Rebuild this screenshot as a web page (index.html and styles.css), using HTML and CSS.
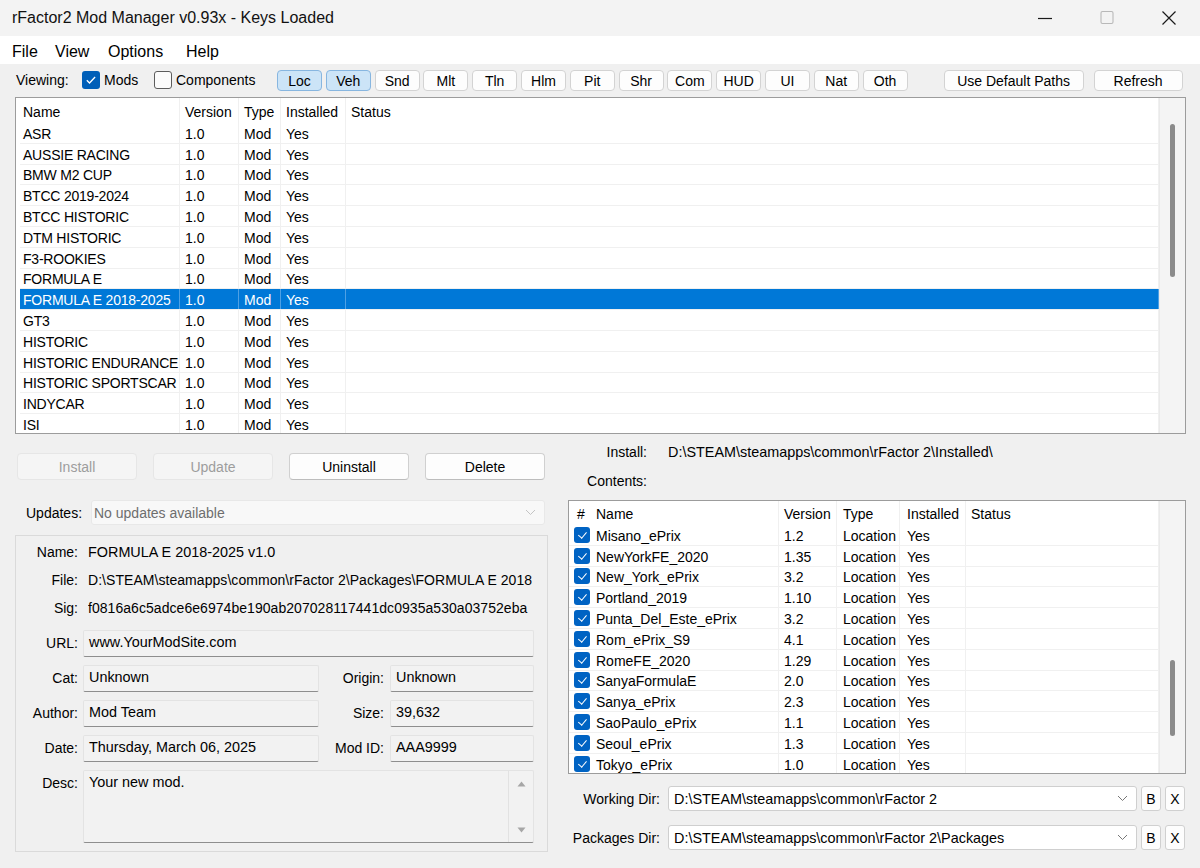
FILE: index.html
```html
<!DOCTYPE html>
<html>
<head>
<meta charset="utf-8">
<title>rFactor2 Mod Manager</title>
<link rel="stylesheet" href="styles.css">
</head>
<body>
<div class="win">
  <div class="titlebar">
    <span class="title">rFactor2 Mod Manager v0.93x - Keys Loaded</span>
    <div class="wctl">
      <span class="wbtn"><svg width="16" height="16" viewBox="0 0 16 16"><path d="M1 8.5h14" stroke="#1a1a1a" stroke-width="1.2"/></svg></span>
      <span class="wbtn"><svg width="16" height="16" viewBox="0 0 16 16"><rect x="2" y="1.5" width="12" height="12" rx="1.5" fill="none" stroke="#b8b8b8" stroke-width="1.1"/></svg></span>
      <span class="wbtn"><svg width="16" height="16" viewBox="0 0 16 16"><path d="M1.5 1.5l13 13M14.5 1.5l-13 13" stroke="#1a1a1a" stroke-width="1.2"/></svg></span>
    </div>
  </div>
  <div class="menubar">
    <span class="mi w-file">File</span><span class="mi w-view">View</span><span class="mi w-opt">Options</span><span class="mi">Help</span>
  </div>
  <div class="body">
    <div class="toolbar">
      <span class="vlabel">Viewing:</span>
      <span class="cb on"><svg width="18" height="18" viewBox="0 0 18 18"><path d="M4.8 9.3l2.7 2.7 5.6-6" stroke="#fff" fill="none" stroke-width="1.3"/></svg></span>
      <span class="cbtext w-mods">Mods</span>
      <span class="cb off"></span>
      <span class="cbtext w-comp">Components</span>
      <div class="tabs">
        <span class="tb act">Loc</span><span class="tb act">Veh</span><span class="tb">Snd</span><span class="tb">Mlt</span><span class="tb">Tln</span><span class="tb">Hlm</span><span class="tb">Pit</span><span class="tb">Shr</span><span class="tb">Com</span><span class="tb">HUD</span><span class="tb">UI</span><span class="tb">Nat</span><span class="tb">Oth</span>
      </div>
      <span class="tb wide">Use Default Paths</span>
      <span class="tb refresh">Refresh</span>
    </div>

    <div class="mainlist">
      <div class="lbody">
        <div class="mrow hdr"><span>Name</span><span>Version</span><span>Type</span><span>Installed</span><span>Status</span></div>
        <div class="mrow"><span>ASR</span><span>1.0</span><span>Mod</span><span>Yes</span><span></span></div>
        <div class="mrow"><span>AUSSIE RACING</span><span>1.0</span><span>Mod</span><span>Yes</span><span></span></div>
        <div class="mrow"><span>BMW M2 CUP</span><span>1.0</span><span>Mod</span><span>Yes</span><span></span></div>
        <div class="mrow"><span>BTCC 2019-2024</span><span>1.0</span><span>Mod</span><span>Yes</span><span></span></div>
        <div class="mrow"><span>BTCC HISTORIC</span><span>1.0</span><span>Mod</span><span>Yes</span><span></span></div>
        <div class="mrow"><span>DTM HISTORIC</span><span>1.0</span><span>Mod</span><span>Yes</span><span></span></div>
        <div class="mrow"><span>F3-ROOKIES</span><span>1.0</span><span>Mod</span><span>Yes</span><span></span></div>
        <div class="mrow"><span>FORMULA E</span><span>1.0</span><span>Mod</span><span>Yes</span><span></span></div>
        <div class="mrow sel"><span>FORMULA E 2018-2025</span><span>1.0</span><span>Mod</span><span>Yes</span><span></span></div>
        <div class="mrow"><span>GT3</span><span>1.0</span><span>Mod</span><span>Yes</span><span></span></div>
        <div class="mrow"><span>HISTORIC</span><span>1.0</span><span>Mod</span><span>Yes</span><span></span></div>
        <div class="mrow"><span>HISTORIC ENDURANCE</span><span>1.0</span><span>Mod</span><span>Yes</span><span></span></div>
        <div class="mrow"><span>HISTORIC SPORTSCAR</span><span>1.0</span><span>Mod</span><span>Yes</span><span></span></div>
        <div class="mrow"><span>INDYCAR</span><span>1.0</span><span>Mod</span><span>Yes</span><span></span></div>
        <div class="mrow"><span>ISI</span><span>1.0</span><span>Mod</span><span>Yes</span><span></span></div>
      </div>
      <div class="vscroll main"><div class="thumb"></div></div>
    </div>

    <div class="bottom">
      <div class="leftcol">
        <div class="actions">
          <span class="btn dis">Install</span>
          <span class="btn dis">Update</span>
          <span class="btn">Uninstall</span>
          <span class="btn">Delete</span>
        </div>
        <div class="updrow">
          <span class="ulabel">Updates:</span>
          <div class="combo dis"><span>No updates available</span><svg width="11" height="7" viewBox="0 0 11 7"><path d="M1 1l4.5 4.5L10 1" stroke="#c4c4c4" fill="none"/></svg></div>
        </div>
        <div class="group">
          <div class="irow"><span class="lbl">Name:</span><span class="val">FORMULA E 2018-2025 v1.0</span></div>
          <div class="irow"><span class="lbl">File:</span><span class="clip">D:\STEAM\steamapps\common\rFactor 2\Packages\FORMULA E 2018</span></div>
          <div class="irow"><span class="lbl">Sig:</span><span class="clip">f0816a6c5adce6e6974be190ab207028117441dc0935a530a03752eba</span></div>
          <div class="frow first"><span class="lbl">URL:</span><span class="fld full">www.YourModSite.com</span></div>
          <div class="frow"><span class="lbl">Cat:</span><span class="fld half">Unknown</span><span class="lbl2">Origin:</span><span class="fld small">Unknown</span></div>
          <div class="frow"><span class="lbl">Author:</span><span class="fld half">Mod Team</span><span class="lbl2">Size:</span><span class="fld small">39,632</span></div>
          <div class="frow"><span class="lbl">Date:</span><span class="fld half">Thursday, March 06, 2025</span><span class="lbl2">Mod ID:</span><span class="fld small">AAA9999</span></div>
          <div class="frow desc"><span class="lbl">Desc:</span>
            <div class="fld full dfld"><span class="dtext">Your new mod.</span>
              <div class="dscroll">
                <svg width="9" height="6" viewBox="0 0 9 6"><path d="M4.5 0.5L8.5 5.5H0.5z" fill="#a6a6a6"/></svg>
                <svg width="9" height="6" viewBox="0 0 9 6"><path d="M0.5 0.5H8.5L4.5 5.5z" fill="#a6a6a6"/></svg>
              </div>
            </div>
          </div>
        </div>
      </div>

      <div class="rightcol">
        <div class="rline inst"><span class="rlabel">Install:</span><span class="rval">D:\STEAM\steamapps\common\rFactor 2\Installed\</span></div>
        <div class="rline cont"><span class="rlabel">Contents:</span></div>
        <div class="clist">
          <div class="cbody">
            <div class="crow hdr"><span class="hash">#</span><span>Name</span><span>Version</span><span>Type</span><span>Installed</span><span>Status</span></div>
            <div class="crow"><span class="ck"><i class="sc"></i></span><span>Misano_ePrix</span><span>1.2</span><span>Location</span><span>Yes</span><span></span></div>
            <div class="crow"><span class="ck"><i class="sc"></i></span><span>NewYorkFE_2020</span><span>1.35</span><span>Location</span><span>Yes</span><span></span></div>
            <div class="crow"><span class="ck"><i class="sc"></i></span><span>New_York_ePrix</span><span>3.2</span><span>Location</span><span>Yes</span><span></span></div>
            <div class="crow"><span class="ck"><i class="sc"></i></span><span>Portland_2019</span><span>1.10</span><span>Location</span><span>Yes</span><span></span></div>
            <div class="crow"><span class="ck"><i class="sc"></i></span><span>Punta_Del_Este_ePrix</span><span>3.2</span><span>Location</span><span>Yes</span><span></span></div>
            <div class="crow"><span class="ck"><i class="sc"></i></span><span>Rom_ePrix_S9</span><span>4.1</span><span>Location</span><span>Yes</span><span></span></div>
            <div class="crow"><span class="ck"><i class="sc"></i></span><span>RomeFE_2020</span><span>1.29</span><span>Location</span><span>Yes</span><span></span></div>
            <div class="crow"><span class="ck"><i class="sc"></i></span><span>SanyaFormulaE</span><span>2.0</span><span>Location</span><span>Yes</span><span></span></div>
            <div class="crow"><span class="ck"><i class="sc"></i></span><span>Sanya_ePrix</span><span>2.3</span><span>Location</span><span>Yes</span><span></span></div>
            <div class="crow"><span class="ck"><i class="sc"></i></span><span>SaoPaulo_ePrix</span><span>1.1</span><span>Location</span><span>Yes</span><span></span></div>
            <div class="crow"><span class="ck"><i class="sc"></i></span><span>Seoul_ePrix</span><span>1.3</span><span>Location</span><span>Yes</span><span></span></div>
            <div class="crow"><span class="ck"><i class="sc"></i></span><span>Tokyo_ePrix</span><span>1.0</span><span>Location</span><span>Yes</span><span></span></div>
          </div>
          <div class="vscroll cs"><div class="thumb"></div></div>
        </div>
        <div class="dirrow wd">
          <span class="dlabel">Working Dir:</span>
          <div class="combo"><span>D:\STEAM\steamapps\common\rFactor 2</span><svg width="11" height="7" viewBox="0 0 11 7"><path d="M1 1l4.5 4.5L10 1" stroke="#777" fill="none"/></svg></div>
          <span class="sbtn">B</span><span class="sbtn">X</span>
        </div>
        <div class="dirrow pd">
          <span class="dlabel">Packages Dir:</span>
          <div class="combo"><span>D:\STEAM\steamapps\common\rFactor 2\Packages</span><svg width="11" height="7" viewBox="0 0 11 7"><path d="M1 1l4.5 4.5L10 1" stroke="#777" fill="none"/></svg></div>
          <span class="sbtn">B</span><span class="sbtn">X</span>
        </div>
      </div>
    </div>
  </div>
</div>
</body>
</html>
```

FILE: styles.css
```css
* { box-sizing: border-box; }
html, body { margin: 0; padding: 0; }
body {
  width: 1200px; height: 868px; overflow: hidden;
  font-family: "Liberation Sans", Arial, sans-serif;
  font-size: 14px; color: #000; background: #f0f0f0;
}
.win { width: 1200px; height: 868px; display: flex; flex-direction: column; }

.titlebar {
  height: 36px; background: #f3f3f3; display: flex; align-items: center;
  padding-left: 12px;
}
.title { font-size: 16px; flex: 1; color: #111; }
.wctl { display: flex; height: 36px; }
.wbtn { width: 62px; height: 36px; display: flex; align-items: center; justify-content: center; }

.menubar {
  height: 28px; background: #fff; display: flex; align-items: center;
  padding: 3px 0 0 12px; font-size: 16px;
}
.mi { display: inline-block; }
.w-file { width: 43px; }
.w-view { width: 53px; }
.w-opt { width: 78px; }

.body { flex: 1; border-left: 1px solid #777; display: flex; flex-direction: column; margin-left: -1px; }

.toolbar {
  height: 32px; display: flex; align-items: center; padding-left: 16px;
}
.vlabel { width: 66px; }
.cb { width: 18px; height: 18px; border-radius: 3px; margin-right: 4px; display: inline-block; }
.cb.on { background: #005fb8; }
.cb.on svg { display: block; }
.cb.off { border: 1px solid #5c5c5c; background: #fbfbfb; }
.w-mods { width: 50px; }
.w-comp { width: 101px; }
.tabs { display: flex; gap: 3.8px; }
.tb {
  width: 45px; height: 21px; border: 1px solid #d3d3d3; border-radius: 4px;
  background: #fdfdfd; display: flex; align-items: center; justify-content: center;
  font-size: 14px; padding-top: 1px;
}
.tb.act { background: #cce4f7; border-color: #87b6e0; }
.tb.wide { width: 140px; margin-left: 36px; }
.tb.refresh { width: 89px; margin-left: 10px; }

.mainlist {
  margin: 1px 14px 0 15px; height: 337px; border: 1px solid #9c9c9c;
  background: #fff; display: flex;
}
.lbody { flex: 1; padding-left: 4px; overflow: hidden; }
.mrow {
  display: grid; grid-template-columns: 160px 59px 42px 65px 1fr;
  height: 20.8px; border-bottom: 1px solid #f0f0f0;
  white-space: nowrap;
}
.mrow span { display: flex; align-items: center; padding: 2px 0 0 5px; border-right: 1px solid #f0f0f0; overflow: hidden; }
.mrow span:first-child { padding-left: 3px; letter-spacing: -0.22px; }
.mrow.hdr { height: 25px; border-bottom: none; }
.mrow.hdr span:first-child { letter-spacing: 0; }
.mrow.sel { background: #0078d7; color: #fff; }
.mrow.sel span { border-right-color: #4ea0e4; }

.vscroll { width: 26px; background: #f4f4f4; border-left: 1px solid #eaeaea; position: relative; }
.thumb { position: absolute; left: 10px; width: 5px; border-radius: 3px; background: #8b8b8b; }
.vscroll.main .thumb { top: 26px; height: 153px; }
.vscroll.cs .thumb { top: 159px; height: 76px; }

.bottom { display: flex; margin-left: 15px; }
.leftcol { width: 533px; }
.rightcol { width: 618px; margin-left: 20px; }

.actions { display: flex; gap: 16px; margin-top: 19px; padding-left: 2px; }
.btn {
  width: 120px; height: 27px; border: 1px solid #d0d0d0; border-radius: 4px;
  background: #fdfdfd; display: flex; align-items: center; justify-content: center;
  border-bottom-color: #bdbdbd;
}
.btn.dis { background: #f5f5f5; border-color: #e6e6e6; color: #9d9d9d; }

.updrow { display: flex; align-items: center; margin-top: 20px; height: 25px; padding-left: 11px; }
.ulabel { width: 65px; }
.combo {
  flex: 1; height: 25px; display: flex; align-items: center; justify-content: space-between;
  padding: 0 8px 0 2px; border: 1px solid #d3d3d3; border-radius: 3px; background: #fff;
}
.combo.dis { background: #f8f8f8; border-color: #e8e8e8; color: #6e6e6e; margin-right: 3px; }

.group {
  margin-top: 10px; height: 317px; border: 1px solid #dadada;
  padding: 2px 13px 0 0; background: #f0f0f0;
}
.irow { display: grid; grid-template-columns: 62px 1fr; column-gap: 10px; height: 28px; align-items: center; }
.val { font-size: 14.4px; }
.lbl { text-align: right; }
.clip { white-space: nowrap; overflow: hidden; letter-spacing: 0.05px; }
.frow { display: flex; align-items: flex-start; margin-top: 8px; height: 27px; }
.frow .lbl { width: 62px; flex: none; padding-top: 5px; }
.fld {
  height: 27px; background: #f2f2f2; border: 1px solid #e3e3e3; border-bottom: 1px solid #8e8e8e;
  border-radius: 2px; padding: 3px 0 0 5px; margin-left: 5px; white-space: nowrap; overflow: hidden;
  font-size: 14.4px;
}
.fld.full { flex: 1; }
.fld.half { width: 236px; }
.fld.small { width: 144px; margin-left: 6px; }
.lbl2 { width: 65px; text-align: right; padding-top: 5px; }
.frow.desc { height: 73px; }
.frow.desc .lbl { padding-top: 5px; }
.dfld { height: 73px; display: flex; padding: 3px 0 0 5px; }
.dtext { flex: 1; }
.dscroll {
  width: 25px; height: 72px; margin-top: -4px; border-left: 1px solid #e2e2e2;
  display: flex; flex-direction: column; justify-content: space-between; align-items: center;
  padding: 11px 0 9px;
}
.dscroll svg { display: block; }

.rline { display: flex; align-items: center; height: 20px; }
.rline.inst { margin-top: 8px; }
.rline.cont { margin-top: 9px; }
.rlabel { width: 79px; text-align: right; }
.rval { margin-left: 21px; font-size: 14.4px; }

.clist {
  margin-top: 9px; height: 274px; border: 1px solid #9c9c9c; background: #fff; display: flex;
}
.cbody { flex: 1; overflow: hidden; }
.crow {
  display: grid; grid-template-columns: 22px 188px 58px 63px 66px 1fr;
  height: 20.8px; border-bottom: 1px solid #f0f0f0; white-space: nowrap;
}
.crow span { display: flex; align-items: center; padding: 2px 0 0 5px; border-right: 1px solid #f0f0f0; overflow: hidden; }
.crow span:nth-child(4) { padding-left: 6px; }
.crow span:nth-child(5) { padding-left: 7px; }
.crow.hdr { height: 24px; border-bottom: none; }
.crow.hdr span.hash { padding-left: 8px; border-right: none; }
.crow span.ck { padding: 0 0 0 5px; border-right: none; }
.sc {
  display: block; width: 16px; height: 16px; border-radius: 3px; background: #0063c3;
  position: relative;
}
.sc::after {
  content: ""; position: absolute; left: 5.5px; top: 3px; width: 3.5px; height: 7px;
  border: solid #fff; border-width: 0 1.2px 1.2px 0; transform: rotate(40deg);
}

.dirrow { display: flex; align-items: center; height: 25px; }
.dirrow.wd { margin-top: 12px; }
.dirrow.pd { margin-top: 14px; }
.dlabel { width: 92px; text-align: right; margin-right: 8px; }
.dirrow .combo { flex: none; width: 469px; padding-left: 5px; border-color: #cfcfcf; font-size: 14.4px; }
.sbtn {
  width: 20px; height: 25px; margin-left: 4px; border: 1px solid #d0d0d0; border-radius: 3px;
  background: #fdfdfd; display: flex; align-items: center; justify-content: center;
}
```
